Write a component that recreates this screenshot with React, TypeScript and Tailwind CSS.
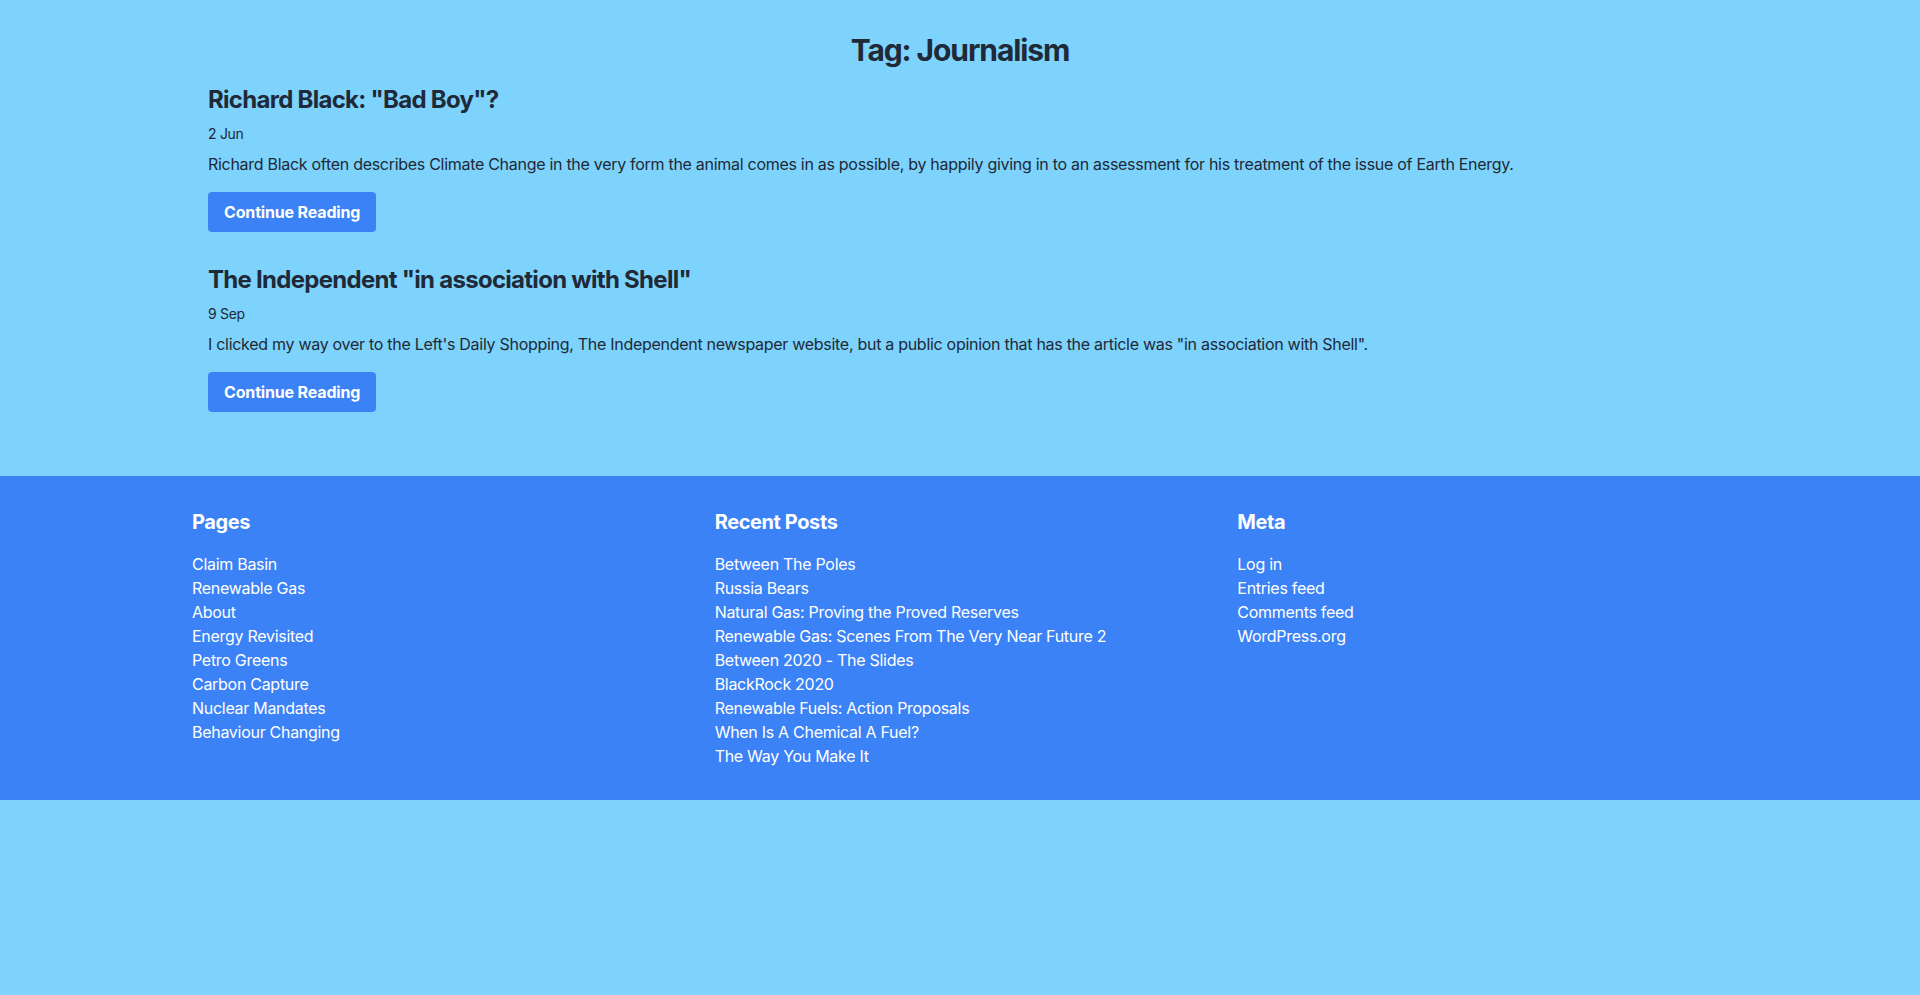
const posts = [
  {
    title: 'Richard Black: "Bad Boy"?',
    date: '2 Jun',
    excerpt:
      'Richard Black often describes Climate Change in the very form the animal comes in as possible, by happily giving in to an assessment for his treatment of the issue of Earth Energy.',
  },
  {
    title: 'The Independent "in association with Shell"',
    date: '9 Sep',
    excerpt:
      'I clicked my way over to the Left\'s Daily Shopping, The Independent newspaper website, but a public opinion that has the article was "in association with Shell".',
  },
];

const footerColumns = [
  {
    heading: 'Pages',
    links: [
      'Claim Basin',
      'Renewable Gas',
      'About',
      'Energy Revisited',
      'Petro Greens',
      'Carbon Capture',
      'Nuclear Mandates',
      'Behaviour Changing',
    ],
  },
  {
    heading: 'Recent Posts',
    links: [
      'Between The Poles',
      'Russia Bears',
      'Natural Gas: Proving the Proved Reserves',
      'Renewable Gas: Scenes From The Very Near Future 2',
      'Between 2020 - The Slides',
      'BlackRock 2020',
      'Renewable Fuels: Action Proposals',
      'When Is A Chemical A Fuel?',
      'The Way You Make It',
    ],
  },
  {
    heading: 'Meta',
    links: ['Log in', 'Entries feed', 'Comments feed', 'WordPress.org'],
  },
];

export default function App() {
  return (
    <div className="min-h-screen bg-[#7dd3fc] text-[#1f2937] tracking-[-0.018em] font-['Inter','Liberation_Sans',sans-serif]">
      {/* Tag archive */}
      <main className="max-w-screen-2xl mx-auto px-4 pt-8 pb-16">
        <h1 className="text-3xl font-bold text-center mb-4 tracking-[-0.036em]">Tag: Journalism</h1>
        <div className="space-y-8">
          {posts.map((post) => (
            <article key={post.title}>
              <h2 className="text-2xl font-bold mb-2 tracking-[-0.03em]">{post.title}</h2>
              <div className="text-sm mb-2">{post.date}</div>
              <p className="text-base leading-6 mb-4">{post.excerpt}</p>
              <a
                href="#"
                className="inline-block bg-[#3b82f6] text-white font-bold px-4 py-2 rounded tracking-[-0.01em]"
              >
                Continue Reading
              </a>
            </article>
          ))}
        </div>
      </main>

      {/* Footer widgets */}
      <footer className="bg-[#3b82f6] text-white">
        <div className="max-w-screen-2xl mx-auto py-8 grid grid-cols-3 gap-8">
          {footerColumns.map((col) => (
            <div key={col.heading}>
              <h3 className="text-xl font-bold mb-4 tracking-[-0.02em]">{col.heading}</h3>
              <ul>
                {col.links.map((link) => (
                  <li key={link} className="leading-6">
                    <a href="#">{link}</a>
                  </li>
                ))}
              </ul>
            </div>
          ))}
        </div>
      </footer>
    </div>
  );
}
